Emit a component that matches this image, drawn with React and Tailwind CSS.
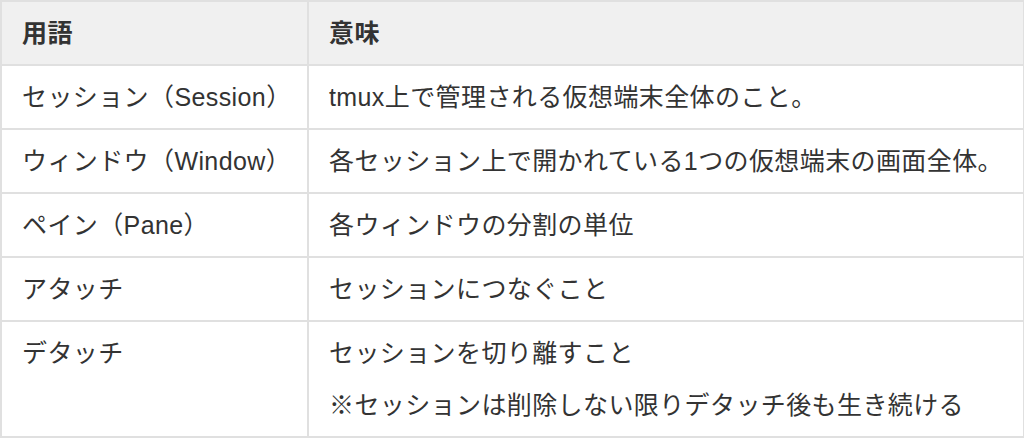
const rows = [
  { term: 'セッション（Session）', desc: ['tmux上で管理される仮想端末全体のこと。'] },
  { term: 'ウィンドウ（Window）', desc: ['各セッション上で開かれている1つの仮想端末の画面全体。'] },
  { term: 'ペイン（Pane）', desc: ['各ウィンドウの分割の単位'] },
  { term: 'アタッチ', desc: ['セッションにつなぐこと'] },
  { term: 'デタッチ', desc: ['セッションを切り離すこと', '※セッションは削除しない限りデタッチ後も生き続ける'] },
]

export default function App() {
  return (
    <div
      className="w-[1024px] h-[438px] bg-white text-[#333] text-[25px] leading-[38px] tracking-[0.4px]"
      style={{ fontFamily: '"Liberation Sans", "Noto Sans CJK JP", sans-serif' }}
    >
      <div className="grid grid-cols-[307px_1fr] border-t-2 border-l-2 border-[#e0e0e0]">
        <div className="bg-[#f0f0f0] font-bold px-5 py-3 border-r-2 border-b-2 border-[#e0e0e0]">用語</div>
        <div className="bg-[#f0f0f0] font-bold px-5 py-3 border-r-2 border-b-2 border-[#e0e0e0]">意味</div>
        {rows.map((r) => (
          <div key={r.term} className="contents">
            <div className="px-5 py-3 border-r-2 border-b-2 border-[#e0e0e0] whitespace-nowrap">{r.term}</div>
            <div className="px-5 py-3 border-r-2 border-b-2 border-[#e0e0e0] flex flex-col gap-[14px] whitespace-nowrap">
              {r.desc.map((d) => (
                <p key={d}>{d}</p>
              ))}
            </div>
          </div>
        ))}
      </div>
    </div>
  )
}
